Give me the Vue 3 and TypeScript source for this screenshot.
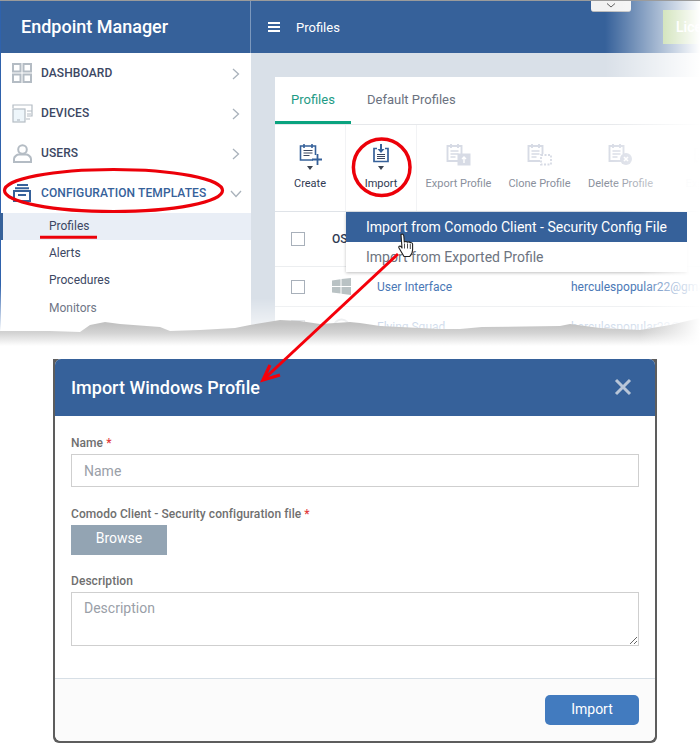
<script setup lang="ts">
interface NavItem { label: string; icon: string }
const nav: NavItem[] = [
  { label: 'DASHBOARD', icon: 'dash' },
  { label: 'DEVICES', icon: 'dev' },
  { label: 'USERS', icon: 'user' },
]
const sub: string[] = ['Profiles', 'Alerts', 'Procedures', 'Monitors']
const actions: string[] = ['Export Profile', 'Clone Profile', 'Delete Profile']
</script>

<template>
  <div class="page">
    <section class="app">
      <aside class="side">
        <div class="brand">Endpoint Manager</div>
        <nav class="nav">
          <div v-for="n in nav" :key="n.label" class="nav-row">
            <span class="nav-ico">
              <svg v-if="n.icon === 'dash'" width="20" height="20" viewBox="0 0 20 20" fill="none" stroke="#b4bcc4" stroke-width="2"><rect x="1" y="1" width="7.5" height="7.5"/><rect x="11.5" y="1" width="7.5" height="7.5"/><rect x="1" y="11.5" width="7.5" height="7.5"/><rect x="11.5" y="11.5" width="7.5" height="7.5"/></svg>
              <svg v-else-if="n.icon === 'dev'" width="21" height="19" viewBox="0 0 21 19" fill="none" stroke="#b4bcc4" stroke-width="1.2"><path d="M1 4V1h19v11h-5"/><rect x="1" y="5" width="12" height="13" fill="#eef6fb"/><path d="M15 7h5M15 10h4M14 15h4"/><path d="M5 16h3"/></svg>
              <svg v-else width="19" height="19" viewBox="0 0 19 19" fill="none" stroke="#b4bcc4" stroke-width="2"><circle cx="9.5" cy="5.5" r="4.3"/><path d="M1 18v-3c0-2.5 3-4.4 5-4.4h7c2 0 5 1.9 5 4.4v3z"/></svg>
            </span>
            <span class="nav-label">{{ n.label }}</span>
            <svg class="chev" width="8" height="12" viewBox="0 0 8 12" fill="none" stroke="#a9b2bb" stroke-width="1.3"><path d="M1 1l5.5 5L1 11"/></svg>
          </div>
          <div class="nav-row active">
            <span class="nav-ico">
              <svg width="18" height="18" viewBox="0 0 18 18" fill="none" stroke="#36619a" stroke-width="2"><path d="M4 1h11M2 4.2h14"/><rect x="1" y="7" width="16" height="10"/><path d="M5 11h8"/></svg>
            </span>
            <span class="nav-label">CONFIGURATION TEMPLATES</span>
            <svg class="chev down" width="12" height="8" viewBox="0 0 12 8" fill="none" stroke="#a9b2bb" stroke-width="1.3"><path d="M1 1l5 5.5L11 1"/></svg>
          </div>
          <div v-for="(s, i) in sub" :key="s" class="sub" :class="{ on: i === 0, dim: i === 3 }">{{ s }}</div>
        </nav>
      </aside>

      <main class="main">
        <header class="top">
          <span class="burger"><i></i><i></i><i></i></span>
          <span class="top-title">Profiles</span>
          <span class="pull">
            <svg width="10" height="5" viewBox="0 0 10 5" fill="none" stroke="#555" stroke-width="1"><path d="M1 .5l4 3.5 4-3.5"/></svg>
          </span>
          <span class="lic">Lice</span>
        </header>
        <div class="content">
          <div class="card">
            <div class="tabs">
              <span class="tab on">Profiles</span>
              <span class="tab">Default Profiles</span>
            </div>
            <div class="tools">
              <div class="tool first">
                <svg width="24" height="22" viewBox="0 0 24 22" fill="none" stroke="#36619a" stroke-width="1.6"><path d="M15 17H2.5V3h15v9M6 1v4M14 1v4"/><path d="M5.5 7.5h9M5.5 10h9M5.500 12.500h6" stroke="#3a4660" stroke-width="1.1"/><path d="M19.5 11v11M14 16.5h10" stroke-width="1.8"/></svg>
                <b class="caret"></b>
                <span>Create</span>
              </div>
              <div class="tool second">
                <svg width="18" height="20" viewBox="0 0 18 20" fill="none" stroke="#36619a" stroke-width="1.7"><path d="M5 5.5H2v13h14v-13h-3"/><path d="M9 1v7" stroke-width="2"/><path d="M5.5 6L9 10l3.500-4z" fill="#36619a" stroke="none"/><path d="M5 11.5h8M5 13.5h8M5 15.5h8" stroke="#3a4660" stroke-width="1"/></svg>
                <b class="caret"></b>
                <span>Import</span>
              </div>
              <div v-for="(a, i) in actions" :key="a" class="tool off">
                <svg width="25" height="23" viewBox="0 0 25 23" fill="none" stroke="#d7dbe5" stroke-width="1.9">
                  <path d="M13 18H1.5V3h14v8M5 1v4M12 1v4"/>
                  <path d="M4.5 8h8M4.5 11h8M4.5 14h5" stroke-width="1.4"/>
                  <g v-if="i === 0"><rect x="12" y="11" width="12" height="11" fill="#d7dbe5" stroke-width="1"/><path d="M18 20v-6M16 16l2-2 2 2" stroke="#fff" stroke-width="1.4"/></g>
                  <rect v-if="i === 1" x="14" y="12" width="10" height="9.5" stroke-dasharray="2 1.5" stroke-width="1.8"/>
                  <g v-if="i === 2"><circle cx="18" cy="16" r="6" fill="#d7dbe5" stroke="none"/><path d="M16 14l4 4M20 14l-4 4" stroke="#fff" stroke-width="1.6"/></g>
                </svg>
                <span>{{ a }}</span>
              </div>
              <div class="tool ghost">
                <svg width="18" height="20" viewBox="0 0 18 20" fill="none" stroke="#e6e8ee" stroke-width="1.6"><path d="M5 5.5H2v13h14v-13h-3M9 1v8M5 12h8M5 15h8"/></svg>
                <span>Export</span>
              </div>
            </div>
            <div class="thead">
              <span class="box"></span>
              <span class="os">OS</span>
            </div>
            <div class="row">
              <span class="box"></span>
              <svg class="win" width="19" height="17" viewBox="0 0 19 17" fill="#b9c2c4"><path d="M0 2.5L8.5 1.3V8H0zM9.5 1.100L19 0v8H9.500zM0 9h8.500v6.500L0 14.500zM9.500 9H19v8l-9.500-1.300z"/></svg>
              <span class="name">User Interface</span>
              <span class="mail">herculespopular22@gmail.com</span>
            </div>
            <div class="row last">
              <span class="box"></span>
              <svg class="win" width="19" height="19" viewBox="0 0 19 19" fill="none" stroke="#c7ccd2" stroke-width="2"><circle cx="9.5" cy="9.5" r="8"/><path d="M6 6l3.500 4L13 6"/></svg>
              <span class="name">Flying Squad</span>
              <span class="mail">herculespopular22@gmail.com</span>
            </div>
            <div class="menu">
              <div class="mi on">Import from Comodo Client - Security Config File</div>
              <div class="mi">Import from Exported Profile</div>
            </div>
          </div>
        </div>
      </main>
    </section>

    <section class="modal">
      <div class="m-inner">
        <header class="m-head">
          <h2>Import Windows Profile</h2>
          <svg width="18" height="18" viewBox="0 0 18 18" stroke="#b9c6d8" stroke-width="3" fill="none"><path d="M2 2l14 14M16 2L2 16"/></svg>
        </header>
        <div class="m-body">
          <label class="l1">Name <em>*</em></label>
          <input class="field" placeholder="Name" />
          <label class="l2">Comodo Client - Security configuration file <em>*</em></label>
          <button class="browse" type="button">Browse</button>
          <label class="l3">Description</label>
          <textarea class="field area" placeholder="Description"></textarea>
        </div>
        <footer class="m-foot">
          <button class="imp" type="button">Import</button>
        </footer>
      </div>
    </section>

    <svg class="overlay" width="700" height="745" viewBox="0 0 700 745" fill="none">
      <defs>
        <linearGradient id="fadeRight" x1="0" x2="1" y1="0" y2="0">
          <stop offset="0" stop-color="#fff" stop-opacity="0"/>
          <stop offset="1" stop-color="#fff" stop-opacity="1"/>
        </linearGradient>
        <linearGradient id="fadeDown" x1="0" x2="0" y1="0" y2="1">
          <stop offset="0" stop-color="#fff" stop-opacity="0"/>
          <stop offset="1" stop-color="#fff" stop-opacity=".75"/>
        </linearGradient>
        <linearGradient id="fadeLine" x1="0" x2="0" y1="0" y2="1">
          <stop offset="0" stop-color="#fff" stop-opacity="0"/>
          <stop offset="1" stop-color="#fff" stop-opacity="1"/>
        </linearGradient>
        <linearGradient id="shadow" gradientUnits="userSpaceOnUse" x1="0" x2="0" y1="324" y2="346">
          <stop offset="0" stop-color="#c2c2c2"/>
          <stop offset=".4" stop-color="#d3d3d3"/>
          <stop offset="1" stop-color="#fff"/>
        </linearGradient>
      </defs>
      <!-- faded right edge and torn paper edge of the cropped screenshot -->
      <rect x="605" y="1" width="95" height="52" fill="url(#fadeRight)"/>
      <rect x="605" y="53" width="95" height="159" fill="url(#fadeRight)"/>
      <rect x="687" y="212" width="13" height="60" fill="#fff" fill-opacity=".9"/>
      <rect x="640" y="272" width="60" height="60" fill="url(#fadeRight)"/>
      <rect x="251" y="298" width="449" height="34" fill="url(#fadeDown)"/>
      <rect x="0" y="285" width="2" height="46" fill="url(#fadeLine)"/>
      <path d="M0 331 L50 331 L80 332 L90 325 L105 322 L120 324 L160 327 L170 331 L200 330 L235 328 L250 325 L280 320 L300 321 L320 324 L350 322 L360 323 L380 326 L440 329 L460 329 L482 327 L560 326 L570 324 L600 328 L640 330 L670 325 L700 318 V352 H0Z" fill="url(#shadow)"/>
      <rect x="640" y="316" width="60" height="36" fill="url(#fadeRight)"/>

      <!-- red annotation marks -->
      <ellipse cx="113.5" cy="190.5" rx="109" ry="21" stroke="#ec0009" stroke-width="3.2"/>
      <path d="M40 237.3H97" stroke="#ec0009" stroke-width="3"/>
      <circle cx="381.7" cy="167.3" r="28.3" stroke="#ec0009" stroke-width="3.5"/>
      <path d="M398 254L264 379" stroke="#f5000a" stroke-width="3"/>
      <path d="M270 365L263 380L280 375" stroke="#f5000a" stroke-width="3.2"/>

      <!-- pointer -->
      <g transform="translate(398 233)">
        <path d="M3 1.5c1.3-1 2.600 0 2.800 1.500l.5 6c1-.7 2.500-.6 3 .2 1-.6 2.400-.5 2.900.5 1.200-.4 2.400.3 2.400 1.500v5.500c0 3-1.500 5.500-3 6.800H6l-5-8.500c-.7-1.500.8-2.500 2-1.500L4 15z" fill="#fff" stroke="#222" stroke-width="1.1" stroke-linejoin="round"/>
        <path d="M6.5 10.500v5M9.500 10.500v5M12.300 11v5" stroke="#222" stroke-width=".8"/>
      </g>
    </svg>
  </div>
</template>

<style>
html, body { margin: 0; background: #fff; }
</style>

<style scoped>
.page {
  position: relative;
  width: 700px;
  height: 745px;
  overflow: hidden;
  background: #fff;
  font-family: Roboto, "Liberation Sans", sans-serif;
}
.app {
  display: flex;
  height: 340px;
  overflow: hidden;
  border-top: 1px solid #9b9b9b;
  box-sizing: border-box;
}
.side {
  width: 251px;
  flex: none;
  box-sizing: border-box;
  border-left: 1px solid #2f62ac;
  background: #fff;
}
.brand {
  height: 52px;
  box-sizing: border-box;
  background: #36619a;
  color: #fff;
  font-size: 18px;
  font-weight: 500;
  line-height: 52px;
  padding-left: 20px;
}
.nav-row {
  display: flex;
  align-items: center;
  height: 40px;
  position: relative;
}
.nav-ico {
  width: 40px;
  padding-left: 2px;
  box-sizing: border-box;
  display: flex;
  justify-content: center;
}
.nav-label {
  font-size: 12px;
  font-weight: 500;
  color: #3c4763;
  letter-spacing: .1px;
}
.active .nav-label { color: #36619a; }
.chev { position: absolute; right: 11px; top: 15px; }
.chev.down { right: 9px; top: 17px; }
.sub {
  height: 27px;
  line-height: 26px;
  padding-left: 48px;
  font-size: 12px;
  color: #3c4763;
}
.sub.on {
  background: #e9eef6;
  box-shadow: inset 3px 0 0 #36619a;
  margin-left: -1px;
  padding-left: 49px;
}
.sub.dim { color: #6f7686; line-height: 29px; }
.main { flex: 1; min-width: 0; display: flex; flex-direction: column; }
.top {
  height: 52px;
  flex: none;
  background: #36619a;
  display: flex;
  align-items: center;
  border-left: 1px solid #7c98bd;
  position: relative;
  margin-left: -1px;
}
.burger { display: flex; flex-direction: column; gap: 2px; margin-left: 17px; }
.burger i { display: block; width: 12px; height: 2px; background: #fff; }
.top-title { color: #fff; font-size: 13px; margin-left: 16px; }
.pull {
  position: absolute;
  left: 340px;
  top: -1px;
  width: 40px;
  height: 12px;
  background: #f2f2f2;
  border-bottom: 1px solid #bbb;
  border-radius: 0 0 3px 3px;
  display: flex;
  align-items: center;
  justify-content: center;
  box-sizing: border-box;
}
.lic {
  position: absolute;
  left: 412px;
  top: 9px;
  width: 60px;
  height: 34px;
  background: #90bb5a;
  color: #fff;
  font-size: 14px;
  font-weight: 500;
  line-height: 34px;
  padding-left: 13px;
  box-sizing: border-box;
}
.content {
  flex: 1;
  background: #d9e0e8;
  padding: 24px 0 0 24px;
  min-height: 0;
}
.card { position: relative; width: 480px; height: 260px; background: #fff; }
.tabs {
  display: flex;
  height: 48px;
  box-sizing: border-box;
  border-bottom: 1px solid #e6e8eb;
}
.tab {
  font-size: 13px;
  line-height: 46px;
  color: #6b7280;
  padding: 0 16px;
  height: 47px;
  box-sizing: border-box;
}
.tab.on { color: #1e9b85; border-bottom: 3px solid #0aa37f; width: 76px; }
.tools { display: flex; height: 87px; box-sizing: border-box; border-bottom: 1px solid #dfe3e8; }
.tool {
  flex: none;
  width: 81px;
  display: flex;
  flex-direction: column;
  align-items: center;
  padding-top: 18px;
  box-sizing: border-box;
  font-size: 11px;
  color: #8a909d;
  position: relative;
}
.tool span { position: absolute; top: 52px; white-space: nowrap; }
.tool.first, .tool.second { width: 71px; color: #2f3a52; border-right: 1px solid #f2f3f5; }
.tool.second { margin-right: 1px; }
.tool.ghost { color: #e4e6eb; }
.caret {
  position: absolute;
  top: 41px;
  border: 3.5px solid transparent;
  border-top: 4px solid #3c4452;
  border-bottom: 0;
}
.thead, .row {
  display: flex;
  align-items: center;
  padding-left: 16px;
  box-sizing: border-box;
  border-bottom: 1px solid #eceef0;
  position: relative;
}
.thead { height: 55px; }
.row { height: 40px; }
.row.last { opacity: .6; border-bottom: 0; }
.box {
  width: 14px;
  height: 14px;
  box-sizing: border-box;
  border: 1px solid #a8b0ba;
  background: #fff;
  flex: none;
}
.os { margin-left: 27px; font-size: 12px; font-weight: 500; color: #2f3a52; }
.win { position: absolute; left: 57px; top: 11px; }
.name { position: absolute; left: 102px; font-size: 12px; color: #4a78b6; }
.mail { position: absolute; left: 296px; font-size: 12px; color: #4a78b6; white-space: nowrap; }
.menu {
  position: absolute;
  left: 71px;
  top: 135px;
  width: 341px;
  background: #fff;
  box-shadow: 0 1px 3px rgba(0, 0, 0, .25);
  z-index: 2;
}
.mi {
  height: 30px;
  line-height: 31px;
  padding-left: 20px;
  font-size: 14px;
  color: #6d7480;
  white-space: nowrap;
}
.mi.on { background: #36619a; color: #fff; }
.modal {
  margin: 19px 0 0 53px;
  width: 604px;
  height: 384px;
  box-sizing: border-box;
  padding: 0 2px 2px;
  background: #5d5d5d;
  border-radius: 0 0 6px 6px;
}
.m-inner {
  height: 100%;
  border-radius: 6px;
  background: #fff;
  overflow: hidden;
  display: flex;
  flex-direction: column;
}
.m-head {
  height: 57px;
  flex: none;
  box-sizing: border-box;
  background: #36619a;
  padding: 0 23px 1px 16px;
  display: flex;
  align-items: center;
  justify-content: space-between;
}
.m-head h2 { margin: 0; color: #fff; font-size: 18px; font-weight: 500; }
.m-body { flex: 1; padding: 0 16px; display: flex; flex-direction: column; align-items: flex-start; }
label {
  font-size: 12px;
  font-weight: 500;
  color: #6f6f6f;
  line-height: 14px;
  letter-spacing: .06px;
  display: block;
}
label em { color: #e23b3b; font-style: normal; }
.l1 { margin-top: 20px; margin-bottom: 4px; }
.l2 { margin-top: 20px; margin-bottom: 4px; }
.l3 { margin-top: 19px; margin-bottom: 4px; }
.field {
  width: 568px;
  height: 33px;
  box-sizing: border-box;
  border: 1px solid #cfcfcf;
  padding: 0 12px;
  font: 14px Roboto, sans-serif;
  color: #555;
  outline: none;
  background: #fff;
}
.field::placeholder { color: #9aa0a8; opacity: 1; }
.area { height: 54px; padding-top: 7px; display: block; resize: vertical; }
.browse {
  width: 96px;
  height: 30px;
  border: 0;
  background: #93a4b3;
  color: #fff;
  font: 14px Roboto, sans-serif;
  padding: 0 0 5px;
}
.m-foot {
  height: 63px;
  flex: none;
  box-sizing: border-box;
  border-top: 1px solid #d7dfe6;
  background: #fbfbfb;
  display: flex;
  justify-content: flex-end;
  padding: 16px 16px 0 0;
}
.imp {
  width: 94px;
  height: 30px;
  border: 0;
  border-radius: 5px;
  background: #427bbf;
  color: #fff;
  font: 14px Roboto, sans-serif;
  padding: 0 0 2px;
}
.overlay { position: absolute; left: 0; top: 0; pointer-events: none; z-index: 5; }
</style>
